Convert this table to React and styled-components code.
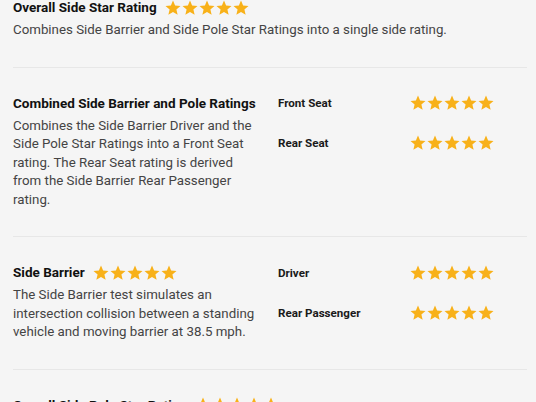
import React from 'react'
import styled, { createGlobalStyle } from 'styled-components'

const Global = createGlobalStyle`
  html, body {
    margin: 0;
    padding: 0;
    background: #f5f5f5;
  }
  body {
    font-family: Roboto, "Liberation Sans", Arial, sans-serif;
    color: #444;
  }
`

const Page = styled.div`
  padding: 0 9px 0 13px;
  margin-top: -2px;
`

const Section = styled.section`
  display: grid;
  grid-template-columns: ${p => (p.single ? '1fr' : '245px 1fr')};
  column-gap: 20px;
  padding: ${p => (p.first ? '0 0 27px' : '26px 0 27px')};
  border-bottom: 1px solid #e7e7e7;
`

const Title = styled.h3`
  display: flex;
  align-items: center;
  gap: 7px;
  margin: 0 0 4px;
  font-size: 13.5px;
  line-height: 19px;
  font-weight: 700;
  color: #111;
`

const Desc = styled.p`
  margin: 0;
  font-size: 13.3px;
  line-height: 18.5px;
  color: #444;
`

const Rows = styled.div`
  display: flex;
  flex-direction: column;
  gap: 21px;
`

const Row = styled.div`
  display: grid;
  grid-template-columns: 131px auto;
  align-items: center;
  height: 19px;
`

const Label = styled.span`
  font-size: 11.6px;
  font-weight: 700;
  color: #1a1a1a;
`

const StarsWrap = styled.span`
  display: inline-flex;
  align-items: center;
`

const StarSvg = styled.svg`
  width: 18px;
  height: 18px;
  margin-right: -1px;
  fill: #f8b119;
`

const Stars = ({ count = 5 }) => (
  <StarsWrap>
    {Array.from({ length: count }).map((_, i) => (
      <StarSvg key={i} viewBox="0 0 24 24">
        <path d="M12 17.27L18.18 21l-1.64-7.03L22 9.24l-7.19-.61L12 2 9.19 8.63 2 9.24l5.46 4.73L5.82 21z" />
      </StarSvg>
    ))}
  </StarsWrap>
)

export default function App() {
  return (
    <Page>
      <Global />
      <Section first single>
        <div>
          <Title>Overall Side Star Rating <Stars /></Title>
          <Desc>Combines Side Barrier and Side Pole Star Ratings into a single side rating.</Desc>
        </div>
      </Section>

      <Section>
        <div>
          <Title>Combined Side Barrier and Pole Ratings</Title>
          <Desc>
            Combines the Side Barrier Driver and the Side Pole Star Ratings into a Front Seat
            rating. The Rear Seat rating is derived from the Side Barrier Rear Passenger rating.
          </Desc>
        </div>
        <Rows>
          <Row><Label>Front Seat</Label><Stars /></Row>
          <Row><Label>Rear Seat</Label><Stars /></Row>
        </Rows>
      </Section>

      <Section>
        <div>
          <Title>Side Barrier <Stars /></Title>
          <Desc>
            The Side Barrier test simulates an intersection collision between a standing
            vehicle and moving barrier at 38.5 mph.
          </Desc>
        </div>
        <Rows>
          <Row><Label>Driver</Label><Stars /></Row>
          <Row><Label>Rear Passenger</Label><Stars /></Row>
        </Rows>
      </Section>

      <Section single>
        <div>
          <Title>Overall Side Pole Star Rating <Stars /></Title>
          <Desc>
            Combines the Side Pole Driver and Side Pole Rear Passenger ratings.
          </Desc>
        </div>
      </Section>
    </Page>
  )
}
